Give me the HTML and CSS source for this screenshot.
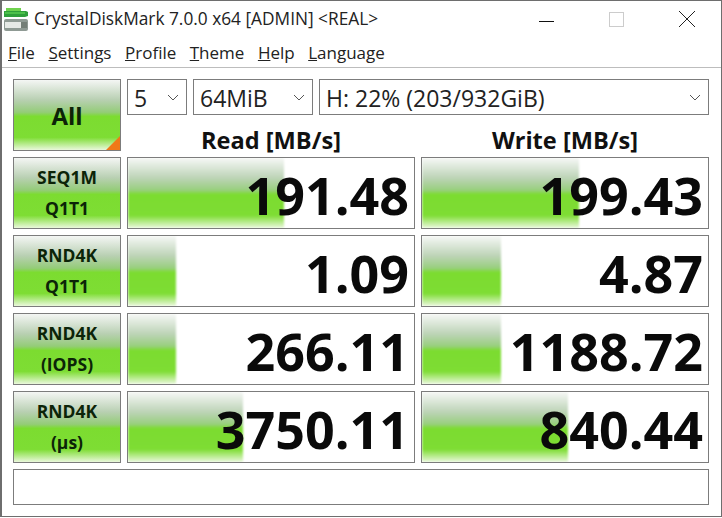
FILE: index.html
```html
<!DOCTYPE html>
<html lang="en">
<head>
    <meta charset="UTF-8">
    <title>CrystalDiskMark</title>
    <link rel="stylesheet" href="styles.css">
</head>
<body>
<div class="window">
    <div class="titlebar">
        <svg class="appicon" width="24" height="24" viewBox="0 0 24 24">
            <rect x="0" y="12" width="24" height="12" rx="2" fill="#8f9a94"/>
            <rect x="1" y="15" width="22" height="6" fill="#e6e9e6"/>
            <rect x="17" y="15" width="6" height="6" fill="#747e77"/>
            <path d="M2 1h15v3H2z" fill="#6fd24e"/>
            <path d="M0 4h22l2 1v4l-3 1H0z" fill="#2f9f3a"/>
            <path d="M1 5h20v2H1z" fill="#4cc04a"/>
        </svg>
        <span class="title">CrystalDiskMark 7.0.0 x64 [ADMIN] &lt;REAL&gt;</span>
        <div class="winbtns">
            <svg width="16" height="16" viewBox="0 0 16 16"><path d="M0 10.5h15" stroke="#111" stroke-width="1"/></svg>
            <svg width="16" height="16" viewBox="0 0 16 16"><rect x="0.5" y="1.5" width="14" height="14" fill="none" stroke="#ccc"/></svg>
            <svg width="16" height="16" viewBox="0 0 16 16"><path d="M0 0l16 16M16 0L0 16" stroke="#222" stroke-width="1"/></svg>
        </div>
    </div>
    <div class="menubar">
        <span><u>F</u>ile</span>
        <span><u>S</u>ettings</span>
        <span><u>P</u>rofile</span>
        <span><u>T</u>heme</span>
        <span><u>H</u>elp</span>
        <span><u>L</u>anguage</span>
    </div>
    <div class="board">
        <div class="btn all">All<i class="corner"></i></div>
        <div class="controls">
            <div class="selects">
                <div class="select count">5<svg class="chev" width="12" height="7" viewBox="0 0 12 7"><path d="M1 1l5 5 5-5" fill="none" stroke="#555"/></svg></div>
                <div class="select size">64MiB<svg class="chev" width="12" height="7" viewBox="0 0 12 7"><path d="M1 1l5 5 5-5" fill="none" stroke="#555"/></svg></div>
                <div class="select drive">H: 22% (203/932GiB)<svg class="chev" width="12" height="7" viewBox="0 0 12 7"><path d="M1 1l5 5 5-5" fill="none" stroke="#555"/></svg></div>
            </div>
            <div class="heads">
                <div>Read [MB/s]</div>
                <div>Write [MB/s]</div>
            </div>
        </div>

        <div class="btn">SEQ1M<br>Q1T1</div>
        <div class="cell"><div class="bar" style="width:156px"></div><span>191.48</span></div>
        <div class="cell"><div class="bar" style="width:157px"></div><span>199.43</span></div>

        <div class="btn">RND4K<br>Q1T1</div>
        <div class="cell"><div class="bar" style="width:48px"></div><span>1.09</span></div>
        <div class="cell"><div class="bar" style="width:79px"></div><span>4.87</span></div>

        <div class="btn">RND4K<br>(IOPS)</div>
        <div class="cell"><div class="bar" style="width:48px"></div><span>266.11</span></div>
        <div class="cell"><div class="bar" style="width:79px"></div><span>1188.72</span></div>

        <div class="btn">RND4K<br>(μs)</div>
        <div class="cell"><div class="bar" style="width:115px"></div><span>3750.11</span></div>
        <div class="cell"><div class="bar" style="width:146px"></div><span>840.44</span></div>

        <div class="status"></div>
    </div>
</div>
</body>
</html>
```

FILE: styles.css
```css
html, body {margin:0; padding:0; background:#fff;}
.window {
    box-sizing: border-box;
    width: 722px;
    height: 517px;
    border: 1px solid #6e6e6e;
    border-left-width: 2px;
    font-family: "Open Sans", "Noto Sans", sans-serif;
    color: #111;
    background: #fff;
}
.titlebar {display:flex; align-items:center; height:37px; padding-left:2px;}
.appicon {margin-top:-1px;}
.title {margin-left:6px; font-size:17.3px; line-height:34px; margin-top:-2px; color:#222; white-space:nowrap;}
.winbtns {margin-left:auto; display:flex; gap:54px; padding-right:26px;}
.winbtns svg {display:block; margin-top:-2px;}

.menubar {
    display:flex; gap:13.5px;
    height:29px;
    padding-left:6px;
    font-size:17px;
    line-height:29px;
    color:#222;
    border-bottom:1px solid #bdbdbd;
}

.board {
    display:grid;
    grid-template-columns:108px 288px 288px;
    grid-auto-rows:72px;
    column-gap:6px;
    row-gap:6px;
    padding:11px 0 0 11px;
}
.btn {
    box-sizing:border-box;
    display:flex; align-items:center; justify-content:center;
    position:relative;
    text-align:center;
    font-weight:700;
    font-size:17.5px;
    line-height:31px;
    color:#0c2408;
    border:1px solid #7c7c7c;
    background:linear-gradient(#f4f6f4 0%, #b9d0b3 28%, #94cc78 46%, #7cdc30 52%, #7edd34 82%, #eaf8dc 100%);
}
.all {font-size:24px; color:#0c2408;}
.corner {
    position:absolute; right:0; bottom:0;
    width:0; height:0;
    border-style:solid;
    border-width:0 0 14px 14px;
    border-color:transparent transparent #f07818 transparent;
}
.controls {grid-column:2 / 4; display:flex; flex-direction:column;}
.selects {display:flex; gap:6px;}
.select {
    box-sizing:border-box;
    display:flex; align-items:center;
    height:36px;
    padding:1px 0 0 6px;
    font-size:23px;
    color:#222;
    border:1px solid #7c7c7c;
    position:relative;
}
.chev {margin-left:auto; margin-right:7px; margin-top:-1px;}
.count {width:60px;}
.size {width:120px;}
.drive {width:390px;}
.heads {display:grid; grid-template-columns:288px 288px; column-gap:6px; flex:1;}
.heads div {text-align:center; font-weight:700; font-size:23.6px; line-height:50px; color:#111;}

.cell {
    box-sizing:border-box;
    position:relative;
    border:1px solid #7c7c7c;
    text-align:right;
    overflow:hidden;
}
.bar {
    position:absolute; left:0; top:0; bottom:0;
    filter:blur(1px);
    background:linear-gradient(#f6f8f6 0%, #bed4b8 28%, #98cf7e 46%, #7cdc30 52%, #7edd34 82%, #eaf8dc 100%);
}
.cell span {
    position:relative;
    display:block;
    padding-right:5px;
    font-weight:700;
    font-size:52px;
    line-height:74px;
    color:#0a0a0a;
}
.status {
    grid-column:1 / 4;
    box-sizing:border-box;
    height:36px;
    border:1px solid #7c7c7c;
}
```
